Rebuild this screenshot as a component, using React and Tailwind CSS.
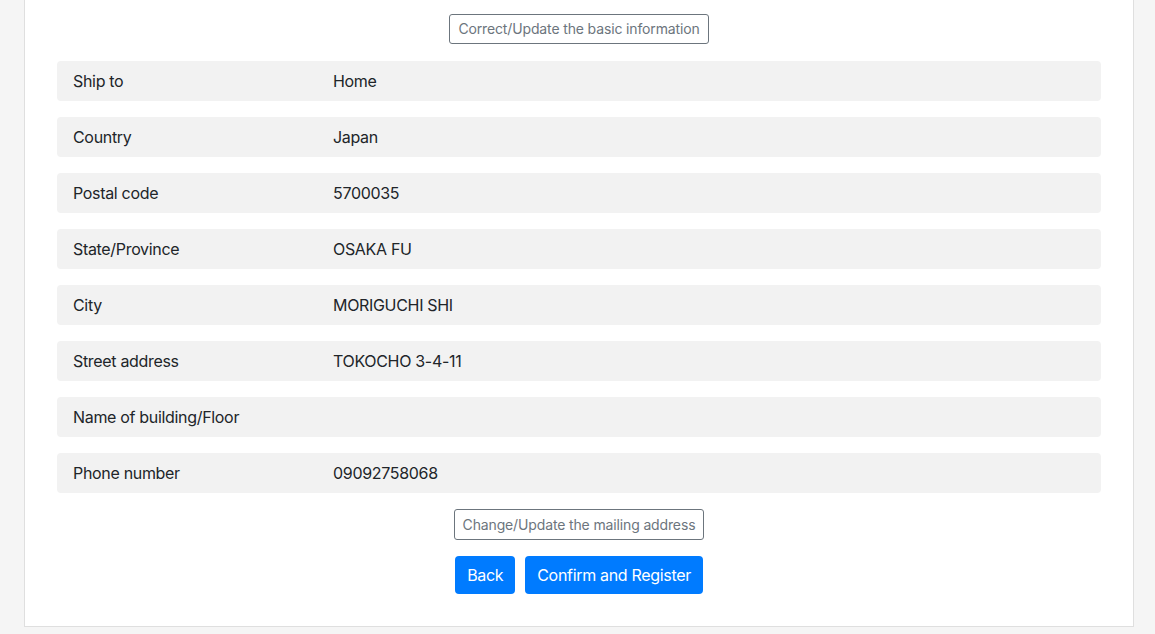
const rows = [
  ["Ship to", "Home"],
  ["Country", "Japan"],
  ["Postal code", "5700035"],
  ["State/Province", "OSAKA FU"],
  ["City", "MORIGUCHI SHI"],
  ["Street address", "TOKOCHO 3-4-11"],
  ["Name of building/Floor", ""],
  ["Phone number", "09092758068"],
];

export default function App() {
  return (
    <div className="min-h-screen bg-[#f5f5f5] pl-6 font-['Inter',sans-serif] text-[#212529]">
      <div className="w-[1110px] border-x border-b border-[#dfdfdf] bg-white px-8 pt-[14px] pb-8">
        <div className="flex justify-center">
          <button
            type="button"
            className="h-[30px] rounded-[3px] border border-[#6c757d] px-2 text-sm tracking-[-0.01em] text-[#6c757d]"
          >
            Correct/Update the basic information
          </button>
        </div>

        <div className="mt-[17px] space-y-4">
          {rows.map(([label, value]) => (
            <div
              key={label}
              className="flex h-10 items-center rounded-sm bg-[#f2f2f2] px-4 text-base tracking-[-0.02em]"
            >
              <div className="w-[260px]">{label}</div>
              <div>{value}</div>
            </div>
          ))}
        </div>

        <div className="mt-4 flex justify-center">
          <button
            type="button"
            className="h-[31px] rounded-[3px] border border-[#6c757d] px-2 text-sm tracking-[-0.01em] text-[#6c757d]"
          >
            Change/Update the mailing address
          </button>
        </div>

        <div className="mt-4 flex justify-center gap-[10px] tracking-[-0.02em]">
          <button type="button" className="h-[38px] rounded bg-[#007bff] px-3 text-base text-white">
            Back
          </button>
          <button type="button" className="h-[38px] rounded bg-[#007bff] px-3 text-base text-white">
            Confirm and Register
          </button>
        </div>
      </div>
    </div>
  );
}
